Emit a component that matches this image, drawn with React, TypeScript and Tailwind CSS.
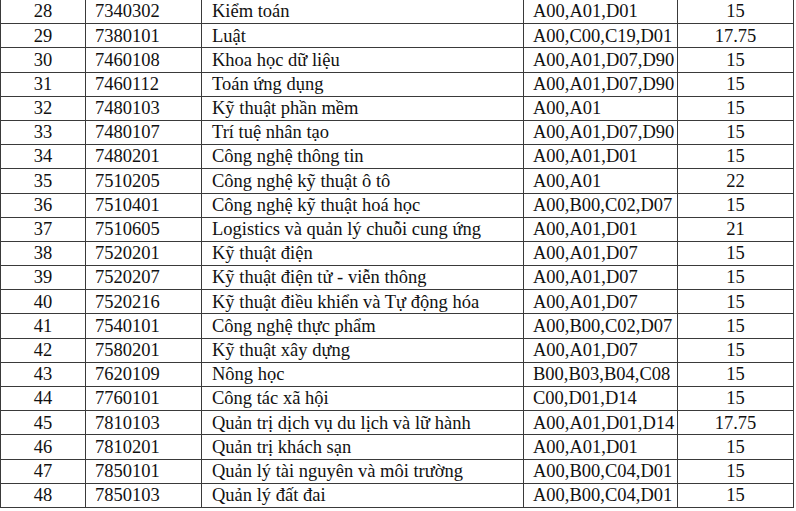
import React from "react";

const rows: [string, string, string, string, string][] = [
  ["28", "7340302", "Kiểm toán", "A00,A01,D01", "15"],
  ["29", "7380101", "Luật", "A00,C00,C19,D01", "17.75"],
  ["30", "7460108", "Khoa học dữ liệu", "A00,A01,D07,D90", "15"],
  ["31", "7460112", "Toán ứng dụng", "A00,A01,D07,D90", "15"],
  ["32", "7480103", "Kỹ thuật phần mềm", "A00,A01", "15"],
  ["33", "7480107", "Trí tuệ nhân tạo", "A00,A01,D07,D90", "15"],
  ["34", "7480201", "Công nghệ thông tin", "A00,A01,D01", "15"],
  ["35", "7510205", "Công nghệ kỹ thuật ô tô", "A00,A01", "22"],
  ["36", "7510401", "Công nghệ kỹ thuật hoá học", "A00,B00,C02,D07", "15"],
  ["37", "7510605", "Logistics và quản lý chuỗi cung ứng", "A00,A01,D01", "21"],
  ["38", "7520201", "Kỹ thuật điện", "A00,A01,D07", "15"],
  ["39", "7520207", "Kỹ thuật điện tử - viễn thông", "A00,A01,D07", "15"],
  ["40", "7520216", "Kỹ thuật điều khiển và Tự động hóa", "A00,A01,D07", "15"],
  ["41", "7540101", "Công nghệ thực phẩm", "A00,B00,C02,D07", "15"],
  ["42", "7580201", "Kỹ thuật xây dựng", "A00,A01,D07", "15"],
  ["43", "7620109", "Nông học", "B00,B03,B04,C08", "15"],
  ["44", "7760101", "Công tác xã hội", "C00,D01,D14", "15"],
  ["45", "7810103", "Quản trị dịch vụ du lịch và lữ hành", "A00,A01,D01,D14", "17.75"],
  ["46", "7810201", "Quản trị khách sạn", "A00,A01,D01", "15"],
  ["47", "7850101", "Quản lý tài nguyên và môi trường", "A00,B00,C04,D01", "15"],
  ["48", "7850103", "Quản lý đất đai", "A00,B00,C04,D01", "15"],
];

export default function App() {
  return (
    <div className="w-[796px] h-[511px] bg-white overflow-hidden" style={{ fontFamily: '"Liberation Serif", "Times New Roman", serif' }}>
      <table className="border-collapse text-[18.5px] leading-none text-[#111] table-fixed w-[793px] -mt-[1px]">
        <colgroup>
          <col className="w-[85px]" />
          <col className="w-[116px]" />
          <col className="w-[322px]" />
          <col className="w-[154px]" />
          <col className="w-[116px]" />
        </colgroup>
        <tbody>
          {rows.map((r) => (
            <tr key={r[0]} className="h-[24.2px]">
              <td className="border border-[#3a3a3a] text-center p-0">{r[0]}</td>
              <td className="border border-[#3a3a3a] pl-[9px] p-0">{r[1]}</td>
              <td className="border border-[#3a3a3a] pl-[10px] p-0 whitespace-nowrap">{r[2]}</td>
              <td className="border border-[#3a3a3a] pl-[9px] p-0 whitespace-nowrap">{r[3]}</td>
              <td className="border border-[#3a3a3a] text-center p-0">{r[4]}</td>
            </tr>
          ))}
        </tbody>
      </table>
    </div>
  );
}
